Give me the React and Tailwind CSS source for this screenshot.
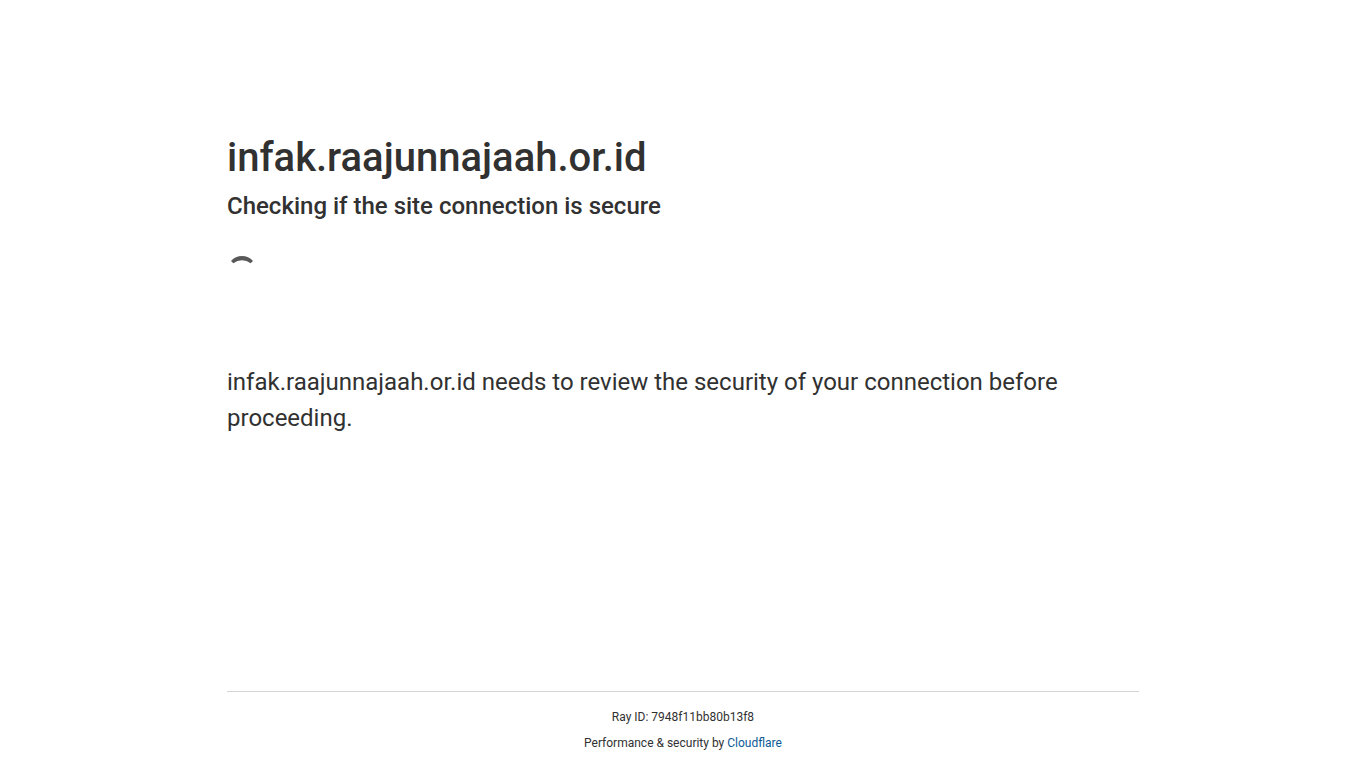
export default function App() {
  return (
    <div className="flex min-h-screen flex-col bg-white font-[Roboto,sans-serif] text-[#313131]">
      <main className="mx-auto flex w-full max-w-[960px] flex-1 flex-col px-6 pt-32">
        <h1 className="text-[40px] leading-[60px] font-medium">infak.raajunnajaah.or.id</h1>
        <h2 className="text-2xl leading-9 font-medium">Checking if the site connection is secure</h2>
        <div role="status" aria-label="Loading" className="mt-8">
          <svg className="block size-[30px]" viewBox="0 0 30 30" fill="#595959">
            <path d="M4 5A14.6 14.6 0 0 1 26 5L23.6 7.2A14.4 14.4 0 0 0 6.4 7.2Z" />
          </svg>
        </div>
        <p className="mt-[78px] text-2xl leading-9">
          infak.raajunnajaah.or.id needs to review the security of your connection before proceeding.
        </p>
      </main>
      <footer className="mx-auto w-full max-w-[960px] px-6 text-center text-xs leading-[18px]">
        <div className="flex flex-col gap-2 border-t border-[#d5d5d5] py-4">
          <div>Ray ID: 7948f11bb80b13f8</div>
          <div>
            Performance &amp; security by <a href="https://www.cloudflare.com" className="text-[#0d5a96]">Cloudflare</a>
          </div>
        </div>
      </footer>
    </div>
  );
}
